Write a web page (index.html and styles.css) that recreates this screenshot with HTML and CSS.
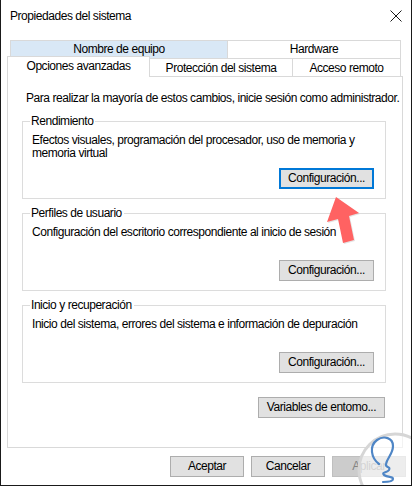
FILE: index.html
```html
<!DOCTYPE html>
<html lang="es">
<head>
  <meta charset="UTF-8" />
  <title>Propiedades del sistema</title>
  <link rel="stylesheet" href="styles.css">
</head>
<body>
<div class="window">
  <div class="titlebar">
    <span class="title">Propiedades del sistema</span>
    <svg class="close" width="12" height="12" viewBox="0 0 12 12"><path d="M0.5 0.5 L11.5 11.5 M11.5 0.5 L0.5 11.5" stroke="#1a1a1a" stroke-width="1"/></svg>
  </div>

  <div class="tabs">
    <div class="tab-row back">
      <div class="tab hover tab-nombre">Nombre de equipo</div>
      <div class="tab tab-hardware">Hardware</div>
    </div>
    <div class="tab-row front">
      <div class="tab active tab-opciones">Opciones avanzadas</div>
      <div class="tab tab-proteccion">Protección del sistema</div>
      <div class="tab tab-acceso">Acceso remoto</div>
    </div>
  </div>

  <div class="panel">
    <p class="intro">Para realizar la mayoría de estos cambios, inicie sesión como administrador.</p>

    <div class="group">
      <div class="group-title">Rendimiento</div>
      <div class="group-text">Efectos visuales, programación del procesador, uso de memoria y<br>memoria virtual</div>
      <div class="group-actions"><button class="btn focused">Configuración...</button></div>
    </div>

    <div class="group">
      <div class="group-title">Perfiles de usuario</div>
      <div class="group-text">Configuración del escritorio correspondiente al inicio de sesión</div>
      <div class="group-actions"><button class="btn">Configuración...</button></div>
    </div>

    <div class="group">
      <div class="group-title">Inicio y recuperación</div>
      <div class="group-text">Inicio del sistema, errores del sistema e información de depuración</div>
      <div class="group-actions"><button class="btn">Configuración...</button></div>
    </div>

    <div class="env-row"><button class="btn btn-env">Variables de entomo...</button></div>
  </div>

  <div class="footer">
    <button class="btn btn-footer">Aceptar</button>
    <button class="btn btn-footer">Cancelar</button>
    <button class="btn btn-footer disabled">Aplicar</button>
  </div>

  <svg class="arrow" width="50" height="60" viewBox="0 0 50 60">
    <polygon points="17,8 40,24 30,27 35,51 24,54 19,30 8,33" fill="#c9c9c9" opacity="0.5"/>
    <polygon points="16,7 39,23 29,26 34,50 23,53 18,29 7,32" fill="#ff6262"/>
  </svg>

  <svg class="watermark" width="60" height="56" viewBox="0 0 60 56">
    <circle cx="38" cy="38" r="36" fill="rgba(255,255,255,0.65)" stroke="#d6d6d6" stroke-width="3"/>
    <path d="M22 32 C14 26 12 14 20 8 C27 3 36 6 36 14 C36 22 30 26 29 32 C28 36 34 34 32 38 C30 41 24 40 27 43 C31 46 36 44 36 47 C36 50 30 50 26 50" fill="none" stroke="#4f86c6" stroke-width="2.2" stroke-linecap="round"/>
  </svg>
</div>
</body>
</html>
```

FILE: styles.css
```css
* { box-sizing: border-box; margin: 0; padding: 0; }

body {
  font-family: "Liberation Sans", Arial, sans-serif;
  font-size: 12px;
  letter-spacing: -0.45px;
  color: #000;
  background: #fff;
}

.window {
  position: relative;
  width: 412px;
  height: 486px;
  background: #fff;
  border-left: 1px solid #1a1a1a;
  border-right: 1px solid #1a1a1a;
  border-bottom: 1px solid #1a1a1a;
  overflow: hidden;
}

.titlebar {
  height: 32px;
  display: flex;
  align-items: center;
  justify-content: space-between;
  padding: 0 9px 0 9px;
}

.title {
  font-size: 12px;
}

.close {
  display: block;
  margin-bottom: 1px;
}

/* tabs */
.tabs {
  margin: 8px 0 0 6px;
}

.tab-row {
  display: flex;
  height: 18px;
}

.tab-row.back {
  margin-left: 3px;
}

.tab {
  height: 18px;
  line-height: 17px;
  text-align: center;
  border: 1px solid #d9d9d9;
  border-bottom: none;
  background: #fff;
  white-space: nowrap;
}

.tab + .tab {
  margin-left: -1px;
}

.tab.hover {
  background: #d9e8f6;
}

.tab-nombre { width: 218px; }
.tab-hardware { width: 174px; }
.tab-opciones { width: 143px; }
.tab-proteccion { width: 144px; line-height: 19px; }
.tab-acceso { width: 109px; line-height: 19px; }

.tab.active {
  position: relative;
  z-index: 2;
  height: 21px;
  margin-top: -2px;
  line-height: 18px;
}

/* panel */
.panel {
  width: 396px;
  height: 372px;
  margin-left: 6px;
  border: 1px solid #d9d9d9;
  padding: 14px 17px 0 18px;
}

.intro {
  line-height: 14px;
  white-space: nowrap;
}

.group {
  margin: 16px 0 0 -4px;
  width: 364px;
  border: 1px solid #dcdcdc;
  padding: 0 11px 9px 9px;
}

.group + .group {
  margin-top: 14px;
}

.group:last-of-type {
  margin-top: 15px;
}

.group-title {
  width: fit-content;
  margin: -8px 0 0 -2px;
  padding: 0 2px 0 1px;
  height: 14px;
  line-height: 14px;
  background: #fff;
}

.group-text {
  margin-top: 6px;
  height: 26px;
  line-height: 13px;
  white-space: nowrap;
}

.group-actions {
  margin-top: 8px;
  display: flex;
  justify-content: flex-end;
}

/* buttons */
.btn {
  font-family: inherit;
  font-size: 12px;
  letter-spacing: -0.45px;
  color: #000;
  height: 21px;
  background: #e1e1e1;
  border: 1px solid #adadad;
  padding: 0;
  width: 95px;
  line-height: 19px;
}

.btn.focused {
  border: 2px solid #0078d7;
  line-height: 17px;
}

.env-row {
  margin-top: 14px;
  display: flex;
  justify-content: flex-end;
}

.btn-env {
  width: 127px;
}

.footer {
  display: flex;
  justify-content: flex-end;
  gap: 7px;
  margin-top: 8px;
  padding-right: 5px;
}

.btn-footer {
  width: 74px;
}

.btn.disabled {
  background: #cccccc;
  border-color: #bfbfbf;
  color: #838383;
}

/* overlays */
.arrow {
  position: absolute;
  left: 319px;
  top: 190px;
}

.watermark {
  position: absolute;
  left: 356px;
  top: 432px;
}
```
